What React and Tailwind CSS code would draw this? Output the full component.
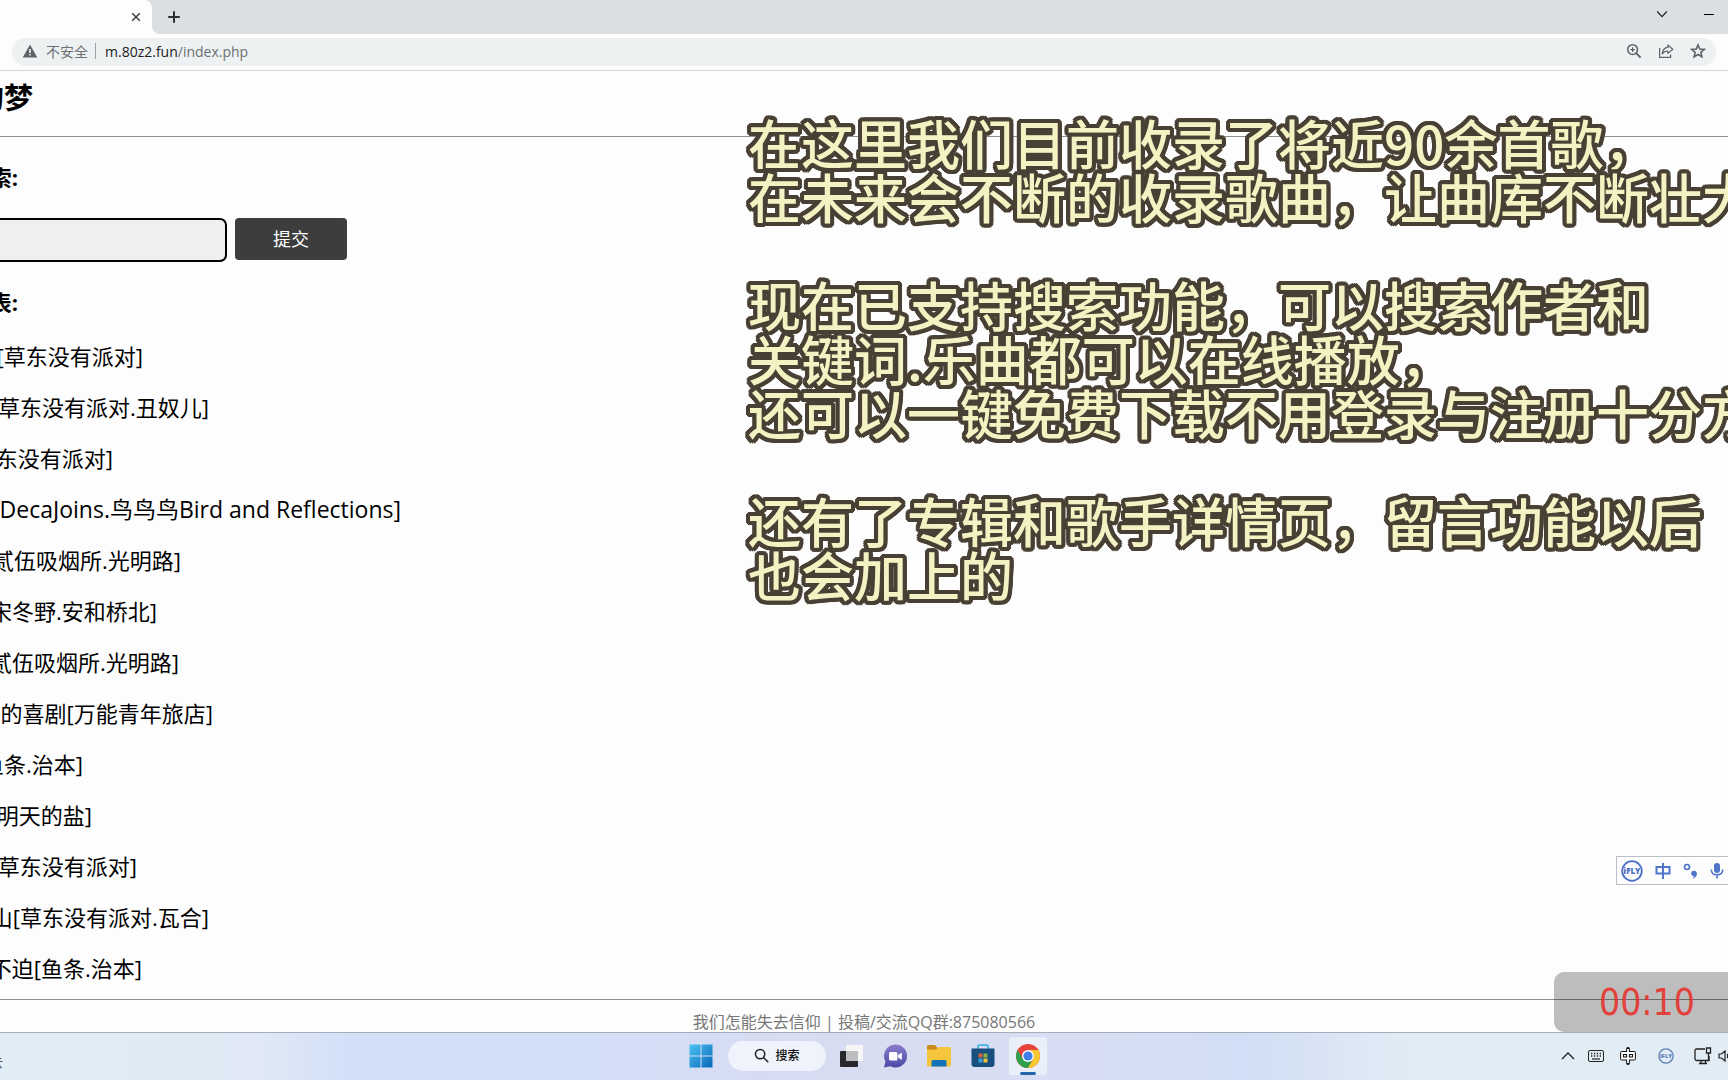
import React from "react";

const SONGS = [
  { text: "[草东没有派对]", style: "w-[143px]" },
  { text: "[草东没有派对.丑奴儿]", style: "w-[209px]" },
  { text: "[草东没有派对]", style: "w-[113px]" },
  { text: "[DecaJoins.鸟鸟鸟Bird and Reflections]", style: "w-[401px] text-[23px]" },
  { text: "[贰伍吸烟所.光明路]", style: "w-[181px]" },
  { text: "[宋冬野.安和桥北]", style: "w-[157px]" },
  { text: "[贰伍吸烟所.光明路]", style: "w-[179px]" },
  { text: "不万能的喜剧[万能青年旅店]", style: "w-[213px]" },
  { text: "[鱼条.治本]", style: "w-[83px]" },
  { text: "[明天的盐]", style: "w-[92px]" },
  { text: "[草东没有派对]", style: "w-[137px]" },
  { text: "山[草东没有派对.瓦合]", style: "w-[209px]" },
  { text: "从容不迫[鱼条.治本]", style: "w-[142px]" },
];

const CAPTION = [
  "在这里我们目前收录了将近90余首歌，\n在未来会不断的收录歌曲，让曲库不断壮大",
  "现在已支持搜索功能，可以搜索作者和\n关键词.乐曲都可以在线播放，\n还可以一键免费下载不用登录与注册十分方便",
  "还有了专辑和歌手详情页，留言功能以后\n也会加上的",
];

function BrowserChrome() {
  return (
    <header>
      <div className="flex h-[34px] bg-[#dbdfe3]">
        <div className="flex w-[152px] items-center justify-end rounded-tr-lg bg-[#fdfdfd] pr-2">
          <button aria-label="关闭标签页" className="flex size-4 items-center justify-center">
            <svg viewBox="0 0 16 16" className="size-4" fill="none" stroke="#3c4043" strokeWidth="1.5">
              <path d="M4.2 4.2l7.6 7.6M11.8 4.2l-7.6 7.6" />
            </svg>
          </button>
        </div>
        <div className="bg-[#fdfdfd]">
          <div className="flex h-full w-11 items-center justify-center rounded-bl-lg bg-[#dbdfe3]">
            <button aria-label="新标签页" className="size-4">
              <svg viewBox="0 0 16 16" className="size-4" fill="none" stroke="#2d3033" strokeWidth="2">
                <path d="M8 2.2v11.6M2.2 8h11.6" />
              </svg>
            </button>
          </div>
        </div>
        <div className="ml-auto flex items-center gap-8 pr-2.5 pb-1.5">
          <button aria-label="搜索标签页" className="size-4">
            <svg viewBox="0 0 16 16" className="size-4" fill="none" stroke="#222" strokeWidth="1.2">
              <path d="M3.2 5.5L8 10.6l4.8-5.1" />
            </svg>
          </button>
          <button aria-label="最小化" className="size-4">
            <svg viewBox="0 0 16 16" className="size-4" fill="none" stroke="#000" strokeWidth="1">
              <path d="M2 8.5h10" />
            </svg>
          </button>
        </div>
      </div>
      <div className="h-[37px] border-b border-[#d3d5d6] bg-[#fdfdfd] px-3 pt-1">
        <div className="flex h-7 items-center rounded-full bg-[#eef1f2] pr-2.5 pb-0.5 pl-2.5 text-[14px]">
          <svg viewBox="0 0 16 16" className="size-4 shrink-0">
            <path d="M8 1.6L15.3 14.4H.7z" fill="#5f6368" />
            <path d="M7.2 6h1.6v4H7.2zM7.2 11h1.6v1.6H7.2z" fill="#eef1f2" />
          </svg>
          <span className="ml-2 text-[#6c7073]">不安全</span>
          <span className="mx-[7px] h-4 w-px bg-[#9da1a4]" />
          <a href="#top" className="ml-0.5 text-[14px] text-[#6c7073]">
            <span className="text-[#202124]">m.80z2.fun</span>/index.php
          </a>
          <div className="ml-auto flex items-center gap-4">
            <button aria-label="缩放" className="size-4">
              <svg viewBox="0 0 16 16" className="size-4" fill="none" stroke="#5f6368" strokeWidth="1.5">
                <circle cx="6.6" cy="6.6" r="4.9" />
                <path d="M10.2 10.2l4.4 4.4" strokeWidth="1.9" />
                <path d="M6.6 4.3v4.6M4.3 6.6h4.6" strokeWidth="1.2" />
              </svg>
            </button>
            <button aria-label="分享" className="size-4">
              <svg viewBox="0 0 16 16" className="size-4" fill="none" stroke="#5f6368" strokeWidth="1.2">
                <path d="M1.6 5v9.4h11V11.6" />
                <path d="M9.8 2l5 4.2-5 4.2V8c-2.6 0-4.2.8-5.6 2.8C4.6 7 6.5 4.7 9.8 4.4z" strokeLinejoin="round" />
              </svg>
            </button>
            <button aria-label="收藏" className="size-4">
              <svg viewBox="0 0 16 16" className="size-4" fill="none" stroke="#5f6368" strokeWidth="1.6">
                <path d="M8 1.9l1.75 4.15 4.5.4-3.4 2.95 1.03 4.4L8 11.45 4.12 13.8l1.03-4.4-3.4-2.95 4.5-.4z" />
              </svg>
            </button>
          </div>
        </div>
      </div>
    </header>
  );
}

function Caption() {
  return (
    <div className="pointer-events-none absolute top-[105px] right-0 left-[738px] flex flex-col gap-[54px] overflow-hidden py-2.5 pl-2.5 font-['Noto_Sans_CJK_SC',sans-serif] text-[53px] leading-[54px] font-medium whitespace-pre text-[#f4f1c2] [text-shadow:4px_0_#484034,-4px_0_#484034,0_4px_#484034,0_-4px_#484034,3px_3px_#484034,-3px_3px_#484034,3px_-3px_#484034,-3px_-3px_#484034,4px_2px_#484034,-4px_2px_#484034,4px_-2px_#484034,-4px_-2px_#484034,2px_4px_#484034,-2px_4px_#484034,2px_-4px_#484034,-2px_-4px_#484034,1px_1px_#484034,-1px_-1px_#484034,2px_-1px_#484034,-2px_1px_#484034]">
      {CAPTION.map((text) => (
        <p key={text}>{text}</p>
      ))}
    </div>
  );
}

function ImeBar() {
  return (
    <div className="absolute top-[856px] right-0 flex h-[29px] w-28 items-center overflow-hidden border border-r-0 border-[#b9bec6] bg-[#fdfdfd] pl-1 text-[#4f74c9]">
      <button aria-label="讯飞输入法" className="size-[22px] shrink-0">
        <FlyLogo color="#4a70c6" />
      </button>
      <button aria-label="中文" className="ml-3 size-4 shrink-0">
        <svg viewBox="0 0 16 16" className="size-4" fill="none" stroke="#4f74c9" strokeWidth="2">
          <path d="M8 0v16M1.5 4h13v6.5h-13z" />
        </svg>
      </button>
      <button aria-label="标点" className="ml-3 size-4 shrink-0">
        <svg viewBox="0 0 16 16" className="size-4">
          <circle cx="4" cy="4" r="2.5" fill="none" stroke="#4f74c9" strokeWidth="1.6" />
          <circle cx="11" cy="10.5" r="2.8" fill="#4f74c9" />
          <path d="M13.8 10.5c0 2.8-1.4 4.3-3.8 5v-1c1.3-.8 1.7-1.5 1.7-2.8z" fill="#4f74c9" />
        </svg>
      </button>
      <button aria-label="语音" className="ml-2.5 size-4 shrink-0">
        <svg viewBox="0 0 16 16" className="size-4" fill="none" stroke="#4f74c9" strokeWidth="1.6">
          <rect x="5" y="0" width="6" height="10" rx="3" fill="#4f74c9" stroke="none" />
          <path d="M2.3 6.5c0 3.6 2.5 5.3 5.7 5.3s5.7-1.7 5.7-5.3M8 12v3.5" />
        </svg>
      </button>
    </div>
  );
}

function FlyLogo({ color }) {
  return (
    <svg viewBox="0 0 22 22" className="size-full">
      <circle cx="11" cy="11" r="9.8" fill="none" stroke={color} strokeWidth="1.8" />
      <text x="11" y="14" textAnchor="middle" fontSize="8" fontWeight="800" fontFamily="Open Sans, sans-serif" fill={color}>iFLY</text>
    </svg>
  );
}

function Taskbar() {
  return (
    <nav
      aria-label="任务栏"
      className="grid h-12 grid-cols-[1fr_auto_1fr] items-center overflow-hidden border-t border-[#a4aeb8] bg-[linear-gradient(90deg,#e1edf5_0%,#e0e9f5_15%,#d3e0f8_20%,#d3def7_34%,#d7dcf1_48%,#d8def3_62%,#d1def5_72%,#dbe7f4_78%,#e1edf5_82%,#e1ecf4_100%)] pb-0.5"
    >
      <div className="flex w-[3px] justify-end pt-3 text-[14px] text-[#555]">去</div>
      <div className="ml-2 flex items-center">
        <button aria-label="开始" className="size-6">
          <svg viewBox="0 0 24 24" className="size-6">
            <defs>
              <linearGradient id="win" x1="0" y1="0" x2="24" y2="24" gradientUnits="userSpaceOnUse">
                <stop offset="0" stopColor="#4fc6f5" />
                <stop offset="1" stopColor="#0563b8" />
              </linearGradient>
            </defs>
            <path fill="url(#win)" d="M.5.5h11v11H.5zM12.5.5h11v11h-11zM.5 12.5h11v11H.5zM12.5 12.5h11v11h-11z" />
          </svg>
        </button>
        <button className="ml-[15px] flex h-[30px] w-[98px] items-center justify-center gap-1.5 rounded-full bg-[#f0f3fb] text-[12px] font-medium text-[#111]">
          <svg viewBox="0 0 16 16" className="size-[15px]" fill="none" stroke="#222" strokeWidth="1.6">
            <circle cx="6.5" cy="6.5" r="5" />
            <path d="M10.2 10.2l5 5" />
          </svg>
          搜索
        </button>
        <button aria-label="任务视图" className="ml-[13px] size-6">
          <svg viewBox="0 0 24 24" className="size-6">
            <rect x="7" y="1" width="17" height="16" rx="1" fill="#f7f7f8" />
            <rect x="1" y="7" width="18" height="16" rx="1" fill="#26282b" />
            <rect x="7" y="7" width="12" height="10" fill="#bcbdbf" />
          </svg>
        </button>
        <button aria-label="聊天" className="ml-5 size-6">
          <svg viewBox="0 0 24 24" className="size-6">
            <defs>
              <linearGradient id="chat" x1="0" y1="0" x2="0" y2="1">
                <stop offset="0" stopColor="#8b7ccb" />
                <stop offset="1" stopColor="#4b4aa8" />
              </linearGradient>
            </defs>
            <path fill="url(#chat)" d="M12.5.5a11.5 11.5 0 1 1-5.2 21.7L1 23.5l1.5-5.8A11.5 11.5 0 0 1 12.5.5z" />
            <rect x="6" y="8" width="8.5" height="8.5" rx="1.5" fill="#fff" />
            <path d="M15.2 11l3.6-2.6v7.6l-3.6-2.6z" fill="#fff" />
          </svg>
        </button>
        <button aria-label="文件资源管理器" className="ml-5 size-6">
          <svg viewBox="0 0 24 24" className="size-6">
            <path d="M0 2.5Q0 1 1.5 1H8l2.5 3H24v4H0z" fill="#c98a1b" />
            <path d="M0 5.5h9L11.5 3H22.5Q24 3 24 4.5V21q0 1.500-1.500 1.500h-21Q0 22.500 0 21z" fill="#f5c63c" />
            <path d="M4.5 22.5v-5q0-1.500 1.500-1.500h12q1.500 0 1.500 1.500v5z" fill="#1272b8" />
          </svg>
        </button>
        <button aria-label="应用商店" className="ml-5 size-6">
          <svg viewBox="0 0 24 24" className="size-6">
            <path d="M7 5V2.5Q7 1.2 8.3 1.2h7.4Q17 1.2 17 2.5V5" fill="none" stroke="#45b3e3" strokeWidth="1.8" />
            <path d="M.5 4.5h23V20q0 3-3 3h-17q-3 0-3-3z" fill="#17507f" />
            <path d="M7.5 9.5h4v4h-4z" fill="#d9603a" />
            <path d="M12.5 9.5h4v4h-4z" fill="#8bb53c" />
            <path d="M7.5 14.5h4v4h-4z" fill="#3aa0dc" />
            <path d="M12.5 14.5h4v4h-4z" fill="#f0c23b" />
          </svg>
        </button>
        <button aria-label="Chrome" className="relative ml-[14px] flex size-[38px] items-center justify-center rounded bg-[#ebeff9]">
          <svg viewBox="0 0 24 24" className="size-6">
            <circle cx="12" cy="12" r="12" fill="#e8433a" />
            <path d="M1.61 6A12 12 0 0 0 12 24l5.2-9L12 17.5 6.8 15z" fill="#2fa04c" />
            <path d="M22.39 6A12 12 0 0 1 12 24l5.2-9 0-6L12 6z" fill="#f8c831" />
            <circle cx="12" cy="12" r="6" fill="#fff" />
            <circle cx="12" cy="12" r="4.6" fill="#3f7fe8" />
          </svg>
          <span className="absolute bottom-0 h-[3px] w-4 rounded-full bg-[#2465a8]" />
        </button>
      </div>
      <div className="flex items-center justify-end">
        <button aria-label="显示隐藏的图标" className="size-4">
          <svg viewBox="0 0 16 16" className="size-4" fill="none" stroke="#222" strokeWidth="1.4">
            <path d="M2 11l6-6 6 6" />
          </svg>
        </button>
        <button aria-label="键盘" className="ml-3 size-4">
          <svg viewBox="0 0 16 16" className="size-4" fill="none" stroke="#222" strokeWidth="1">
            <rect x=".5" y="2.5" width="15" height="11" rx="1.5" />
            <path d="M3 5.5h10M3 8h10" strokeWidth="1.3" strokeDasharray="1.3 1.6" />
            <path d="M4 11h8" strokeWidth="1.2" />
          </svg>
        </button>
        <button aria-label="中文输入" className="ml-4 size-4">
          <svg viewBox="0 0 16 16" className="size-4 overflow-visible" fill="none">
            <path d="M8 1v14M2 5h12v5.5H2z" stroke="#111" strokeWidth="3.8" strokeLinejoin="round" strokeLinecap="round" />
            <path d="M8 1v14M2 5h12v5.5H2z" stroke="#fff" strokeWidth="1.8" />
          </svg>
        </button>
        <button aria-label="讯飞" className="ml-[22px] size-4">
          <FlyLogo color="#5d7fb5" />
        </button>
        <button aria-label="网络" className="ml-5 size-[18px]">
          <svg viewBox="0 0 18 18" className="size-[18px]" fill="none" stroke="#222" strokeWidth="1.3">
            <path d="M11 2H2.5Q1 2 1 3.5v8.5q0 1.5 1.5 1.5H15V9M5 16.5h8M7 13.5v3M11.5 13.5v3" />
            <path d="M12.5 1h4v5h-4zM14.5 6v7.5" />
          </svg>
        </button>
        <div className="ml-1.5 flex w-2.5 overflow-hidden">
          <svg viewBox="0 0 10 16" className="h-4 w-2.5" fill="none" stroke="#222" strokeWidth="1.2">
            <path d="M1 6h2.5L7 3v10L3.5 10H1zM9.2 6q1 2 0 4" />
          </svg>
        </div>
      </div>
    </nav>
  );
}

export default function App() {
  return (
    <div className="relative flex min-h-screen flex-col overflow-hidden bg-[#fdfdfd] font-['Open_Sans','Noto_Sans_CJK_SC',sans-serif] text-black">
      <BrowserChrome />
      <main className="flex-1">
        <div className="h-[66px] border-b border-[#8e8e8e] pt-[5px]">
          <h1 className="flex w-[33px] justify-end text-[29px] leading-[44px] font-bold whitespace-nowrap">的梦</h1>
        </div>
        <h2 className="mt-[25px] flex w-[18px] justify-end text-[22px] leading-[30px] font-bold whitespace-nowrap">
          <label htmlFor="query">搜索:</label>
        </h2>
        <form className="mt-[26px] flex items-start gap-2" onSubmit={(e) => e.preventDefault()}>
          <input
            id="query"
            type="text"
            className="h-11 w-[227px] rounded-r-[7px] border-2 border-l-0 border-black bg-[#efefef] px-2 outline-none"
          />
          <button type="submit" className="h-[42px] w-28 rounded bg-[#3d3d3d] text-[18px] text-white">提交</button>
        </form>
        <h2 className="mt-[25px] flex w-[18px] justify-end text-[22px] leading-[30px] font-bold whitespace-nowrap">列表:</h2>
        <ul className="mt-3.5 text-[22px] leading-[51px]">
          {SONGS.map((song, i) => (
            <li key={i} className="h-[51px]">
              <a href="#song" className={"flex justify-end whitespace-nowrap " + song.style}>{song.text}</a>
            </li>
          ))}
        </ul>
      </main>
      <footer className="h-[33px] border-t border-[#8e8e8e] pt-2 text-center text-[16px] leading-[28px] text-[#777]">
        我们怎能失去信仰 | 投稿/交流QQ群:875080566
      </footer>
      <Taskbar />
      <Caption />
      <ImeBar />
      <div className="absolute right-0 bottom-12 flex h-[60px] w-[174px] items-center rounded-l-[10px] bg-black/25 pt-0.5 pl-[45px] font-['DejaVu_Sans_Condensed','DejaVu_Sans',sans-serif] text-[37px] text-[#e8302a]/90">
        00:10
      </div>
    </div>
  );
}
